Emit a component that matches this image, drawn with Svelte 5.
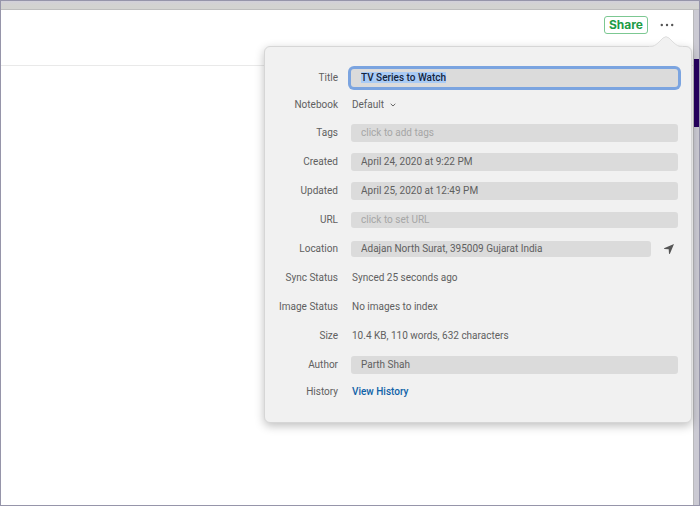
<!-- Note window with the info popover open -->
<script>
	import { onMount } from 'svelte';

	let title = 'TV Series to Watch';
	let notebook = 'Default';
	let tags = '';
	let created = 'April 24, 2020 at 9:22 PM';
	let updated = 'April 25, 2020 at 12:49 PM';
	let url = '';
	let location = 'Adajan North Surat, 395009 Gujarat India';
	let author = 'Parth Shah';

	let show_info = true;
	let title_input;

	onMount(() => {
		title_input.focus();
		title_input.select();
	});
</script>

<div class="desktop">
	<div class="titlebar"></div>
	<div class="window">
		<header>
			<button class="share">Share</button>
			<button class="more" aria-label="Note info" on:click={() => show_info = !show_info}>
				<svg width="14" height="4" viewBox="0 0 14 4">
					<circle cx="1.8" cy="2" r="1.2" />
					<circle cx="7" cy="2" r="1.2" />
					<circle cx="12.2" cy="2" r="1.2" />
				</svg>
			</button>

			{#if show_info}
				<div class="popover">
					<svg class="arrow" width="34" height="12" viewBox="0 0 34 12">
						<path class="fill" d="M0 11 C5 11 7 9 10 6 L14 2 Q17 -0.6 20 2 L24 6 C27 9 29 11 34 11 V12 H0 Z" />
						<path class="edge" d="M0 10.5 C5 10.5 7 9 10 6 L14 2 Q17 -0.6 20 2 L24 6 C27 9 29 10.5 34 10.5" />
					</svg>

					<div class="row">
						<label for="title">Title</label>
						<input id="title" class="title" bind:value={title} bind:this={title_input} />
					</div>
					<div class="row tight">
						<label for="notebook">Notebook</label>
						<div class="picker">
							<select id="notebook" bind:value={notebook}>
								<option>Default</option>
							</select>
							<svg width="6" height="4" viewBox="0 0 6 4">
								<path d="M0.7 0.8 L3 3 L5.3 0.8" />
							</svg>
						</div>
					</div>
					<div class="row">
						<label for="tags">Tags</label>
						<input id="tags" placeholder="click to add tags" bind:value={tags} />
					</div>
					<div class="row">
						<label for="created">Created</label>
						<input id="created" bind:value={created} />
					</div>
					<div class="row">
						<label for="updated">Updated</label>
						<input id="updated" bind:value={updated} />
					</div>
					<div class="row">
						<label for="url">URL</label>
						<input id="url" class="slim" placeholder="click to set URL" bind:value={url} />
					</div>
					<div class="row">
						<label for="location">Location</label>
						<div class="locate">
							<input id="location" class="slim" bind:value={location} />
							<button aria-label="Use current location">
								<svg width="10" height="10" viewBox="0 0 10 10">
									<path d="M10 0 L0 4.2 L0.3 5 L4.7 5.3 L5 9.7 L5.8 10 Z" />
								</svg>
							</button>
						</div>
					</div>
					<div class="row">
						<span class="name">Sync Status</span>
						<span class="value">Synced 25 seconds ago</span>
					</div>
					<div class="row">
						<span class="name">Image Status</span>
						<span class="value">No images to index</span>
					</div>
					<div class="row">
						<span class="name">Size</span>
						<span class="value">10.4 KB, 110 words, 632 characters</span>
					</div>
					<div class="row">
						<label for="author">Author</label>
						<input id="author" bind:value={author} />
					</div>
					<div class="row tight">
						<span class="name">History</span>
						<a class="value" href="#history">View History</a>
					</div>
				</div>
			{/if}
		</header>
		<main></main>
	</div>
	<div class="behind"></div>
</div>

<style>
	:global(body) {
		font-family: Roboto, "Liberation Sans", sans-serif;
		font-size: 10px;
		line-height: 12px;
	}

	.desktop {
		box-sizing: border-box;
		min-height: 100vh;
		display: grid;
		grid-template: 9px 1fr / 1fr 5px;
		background: #cbcad3;
		border: 1px solid #9695aa;
	}

	.titlebar {
		grid-column: 1 / 3;
		background: linear-gradient(#d2d0da, #d3d3d1 50%);
		border-bottom: 1px solid #bebebe;
		box-sizing: border-box;
	}

	.window {
		display: flex;
		flex-direction: column;
		background: #fff;
		border-right: 1px solid #b9b9bb;
	}

	/* strip of the app that sits behind the note window */
	.behind {
		height: 68px;
		margin-top: 49px;
		background: #26005f;
	}

	header {
		position: relative;
		display: flex;
		justify-content: flex-end;
		align-items: flex-start;
		gap: 8px;
		height: 56px;
		box-sizing: border-box;
		padding: 6px 15px 0 0;
		border-bottom: 1px solid #e9e9e9;
	}

	main {
		flex: 1;
	}

	button {
		font: inherit;
		padding: 0;
		border: none;
		background: none;
		cursor: pointer;
	}

	.share {
		width: 44px;
		height: 18px;
		color: #1d9c46;
		font-family: Inter, sans-serif;
		font-size: 12px;
		font-weight: 700;
		border: 1px solid #7cc892;
		border-radius: 3px;
	}

	.more {
		display: flex;
		align-items: center;
		justify-content: center;
		width: 22px;
		height: 18px;
		fill: #555;
	}

	.popover {
		position: absolute;
		top: 36px;
		right: 1px;
		z-index: 10;
		box-sizing: border-box;
		width: 428px;
		max-width: 100%;
		padding: 16px 13px 17px 12px;
		color: #606060;
		background: #f1f1f1;
		border: 1px solid #d6d6d6;
		border-radius: 6px;
		box-shadow: 0 3px 10px rgba(0, 0, 0, 0.25);
	}

	.arrow {
		position: absolute;
		top: -11px;
		right: 8px;
	}

	.arrow .fill {
		fill: #f1f1f1;
	}

	.arrow .edge {
		fill: none;
		stroke: #dedede;
	}

	.row {
		display: grid;
		grid-template-columns: 61px 1fr;
		column-gap: 13px;
		align-items: center;
		height: 29px;
	}

	.row.tight {
		height: 26px;
	}

	label,
	.name {
		text-align: right;
		white-space: nowrap;
	}

	.value {
		padding-left: 1px;
	}

	input {
		box-sizing: border-box;
		width: 100%;
		min-width: 0;
		height: 18px;
		padding: 0 10px;
		font: inherit;
		color: #606060;
		background: #dbdbdb;
		border: none;
		border-radius: 3px;
		outline: none;
	}

	input.slim {
		height: 16px;
	}

	input.title {
		color: #1c1c1c;
		font-weight: 500;
	}

	input:focus {
		box-shadow: 0 0 0 3px #7ba4e0;
	}

	input::selection {
		color: #14243c;
		background: #a9cbf5;
	}

	input::placeholder {
		color: #a6a6a6;
		opacity: 1;
	}

	.picker {
		display: flex;
		align-items: center;
		gap: 6px;
		padding-left: 1px;
	}

	.picker svg {
		fill: none;
		stroke: #666;
	}

	select {
		appearance: none;
		padding: 0;
		font: inherit;
		color: inherit;
		background: none;
		border: none;
	}

	.locate {
		display: flex;
		align-items: center;
		gap: 13px;
	}

	.locate button {
		display: flex;
		padding-right: 4px;
		fill: #555;
	}

	a {
		color: #0f62a8;
		font-weight: 500;
		text-decoration: none;
	}

	a:hover {
		text-decoration: underline;
	}
</style>
